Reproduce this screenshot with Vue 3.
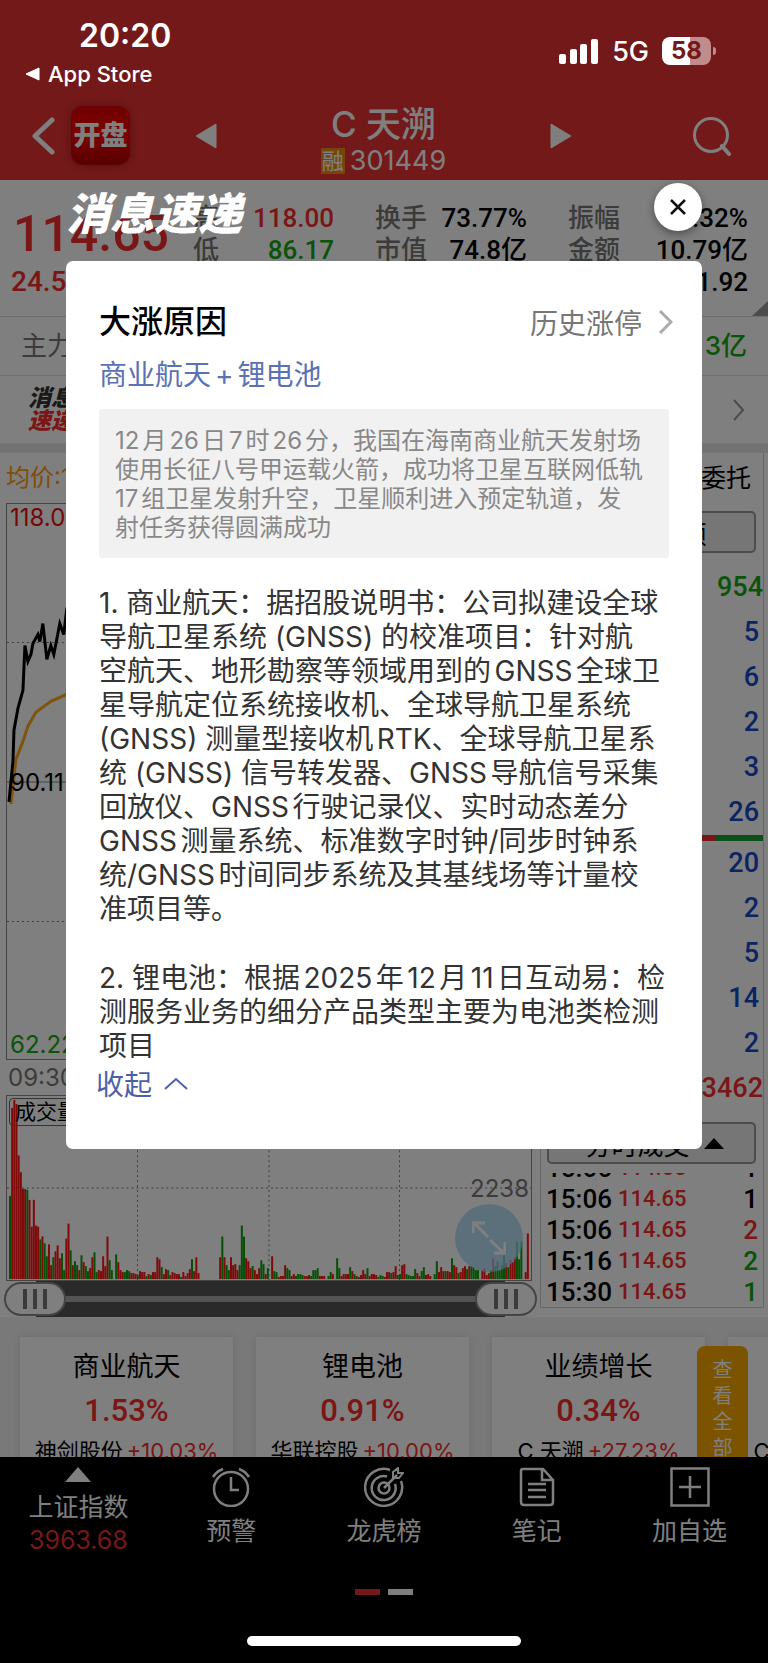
<template>
  <div class="app">
    <header class="top">
      <div class="status">
        <div class="status-left">
          <div class="time">20:20</div>
          <a class="back-app" href="#">
            <svg width="15" height="14" viewBox="0 0 15 14"><path d="M14 1v12L1 7z" fill="#fff" stroke="#fff" stroke-linejoin="round" /></svg>
            App Store
          </a>
        </div>
        <div class="status-right">
          <svg width="40" height="25" viewBox="0 0 40 25" fill="#fff">
            <rect x="0" y="15" width="7" height="10" rx="2" />
            <rect x="11" y="10" width="7" height="15" rx="2" />
            <rect x="21" y="5" width="7" height="20" rx="2" />
            <rect x="32" y="0" width="7" height="25" rx="2" />
          </svg>
          <span class="net">5G</span>
          <span class="battery">58</span>
        </div>
      </div>
      <nav class="nav">
        <button class="icon-btn" aria-label="返回">
          <svg width="24" height="38" viewBox="0 0 24 38"><path d="M21 3L4 19l17 16" fill="none" stroke="#fff" stroke-width="5" stroke-linecap="round" stroke-linejoin="round" /></svg>
        </button>
        <span class="logo">开盘</span>
        <button class="icon-btn prev" aria-label="上一只">
          <svg width="22" height="26" viewBox="0 0 22 26"><path d="M21 1v24L1 13z" fill="#fff" stroke="#fff" stroke-linejoin="round" /></svg>
        </button>
        <div class="stock">
          <h1>C 天溯</h1>
          <div class="code"><span class="rong">融</span>301449</div>
        </div>
        <button class="icon-btn next" aria-label="下一只">
          <svg width="22" height="26" viewBox="0 0 22 26"><path d="M1 1v24l20-12z" fill="#fff" stroke="#fff" stroke-linejoin="round" /></svg>
        </button>
        <button class="icon-btn" aria-label="搜索">
          <svg width="38" height="40" viewBox="0 0 38 40" fill="none" stroke="#fff" stroke-width="3"><circle cx="18" cy="19" r="16.5" /><path d="M29 30l7 8" stroke-width="4" stroke-linecap="round" /></svg>
        </button>
      </nav>
    </header>

    <main>
      <section class="quote">
        <div class="last">
          <div class="price">114.65</div>
          <div class="change">24.54</div>
        </div>
        <dl v-for="(col, i) in quoteCols" :key="i">
          <div v-for="item in col" :key="item.label">
            <dt>{{ item.label }}</dt>
            <dd :class="item.tone">{{ item.value }}</dd>
          </div>
        </dl>
      </section>
      <section class="main-force">
        <span>主力净额</span>
        <b>3亿</b>
      </section>
      <section class="news">
        <div class="news-logo">消息<br /><em>速递</em></div>
        <svg width="12" height="22" viewBox="0 0 12 22"><path d="M2 1l9 10-9 10" fill="none" stroke="#999" stroke-width="2" /></svg>
      </section>

      <section class="trade">
        <div class="charts">
          <div class="avg">均价:111.86</div>
          <div class="price-chart">
            <svg viewBox="0 0 526 557" preserveAspectRatio="none">
              <path d="M0 139H526M0 419H526" class="grid-line" />
              <path d="M0 279H526" class="mid-line" />
              <polyline class="avg-line" points="4,301 9,256 15,241 21,223 29,209 44,198 60,191 90,186 140,180" />
              <polyline class="price-line" points="2,299 6,258 7,227 11,205 16,187 18,142 21,158 24,151 26,140 31,131 33,138 36,120 40,156 44,142 47,151 53,120 57,131 60,105 70,98" />
            </svg>
            <span class="label high">118.00</span>
            <span class="label mid">90.11</span>
            <span class="label low">62.22</span>
          </div>
          <div class="start-time">09:30</div>
          <div class="volume">
            <span class="vol-name">成交量</span>
            <svg viewBox="0 0 526 186" preserveAspectRatio="none">
              <path d="M0 93H526M131 0V186M263 0V186M394 0V186" class="grid-line" />
              <rect
                v-for="bar in bars"
                :key="bar.x"
                :x="bar.x"
                :y="185 - bar.h"
                width="2"
                :height="bar.h"
                :fill="bar.color"
              />
            </svg>
            <span class="vol-half">2238</span>
            <button class="expand" aria-label="放大">
              <svg width="34" height="34" viewBox="0 0 34 34" fill="none" stroke="#fff" stroke-width="3"><path d="M16 16L2 2M1 12V2h12M18 19l14 13M22 32h11V21" /></svg>
            </button>
          </div>
          <div class="slider">
            <button class="handle" aria-label="起点"><i></i><i></i><i></i></button>
            <div class="track"></div>
            <button class="handle" aria-label="终点"><i></i><i></i><i></i></button>
          </div>
        </div>

        <aside class="orders">
          <div class="orders-tab">委托</div>
          <button class="box-btn">委托总额</button>
          <div class="total sell">954</div>
          <div v-for="(n, i) in sells" :key="'s' + i" class="order">{{ n }}</div>
          <div class="ratio"></div>
          <div v-for="(n, i) in buys" :key="'b' + i" class="order">{{ n }}</div>
          <div class="total buy">3462</div>
          <button class="box-btn deals-btn">
            分时成交
            <svg width="20" height="11" viewBox="0 0 20 11"><path d="M0 11L10 0l10 11z" /></svg>
          </button>
          <div class="deals">
            <div v-for="(d, i) in deals" :key="i" class="deal">
              <span class="deal-time">{{ d.time }}</span>
              <span class="deal-price">114.65</span>
              <span :class="d.tone">{{ d.qty }}</span>
            </div>
          </div>
        </aside>
      </section>

      <section class="themes">
        <article v-for="(t, i) in themes" :key="i" class="theme">
          <h3>{{ t.name }}</h3>
          <div class="theme-rate">{{ t.rate }}</div>
          <div class="theme-stock">{{ t.stock }}<span>{{ t.stockRate }}</span></div>
        </article>
        <button class="all-btn">查看全部</button>
      </section>
    </main>

    <footer class="bottom">
      <div class="tabs">
        <a class="index" href="#">
          <svg width="26" height="15" viewBox="0 0 26 15"><path d="M0 15L13 0l13 15z" fill="#fff" /></svg>
          <span>上证指数</span>
          <b>3963.68</b>
        </a>
        <a href="#">
          <svg width="40" height="40" viewBox="0 0 40 40" fill="none" stroke="#fff" stroke-width="2.5"><circle cx="20" cy="22" r="17" /><path d="M20 10v13h8M2 10a20 20 0 0 1 10-8M38 10a20 20 0 0 0-10-8" /></svg>
          <span>预警</span>
        </a>
        <a href="#">
          <svg width="40" height="40" viewBox="0 0 40 40" fill="none" stroke="#fff" stroke-width="2.5"><path d="M26 3A18.500 18.500 0 1 0 37 14" /><path d="M23 9.500A12 12 0 1 0 31 17" /><circle cx="20" cy="21" r="5.500" /><path d="M20 21L33 8" /><path d="M29 11V5l5-4v5h5l-4 5z" stroke-width="2" /></svg>
          <span>龙虎榜</span>
        </a>
        <a href="#">
          <svg width="36" height="40" viewBox="0 0 36 40" fill="none" stroke="#fff" stroke-width="2.5"><path d="M4 2h20l10 11v22q0 3-3 3H5q-3 0-3-3V4q0-2 2-2zM23 2v11h11M9 17h18M9 23h18M9 30h18" /></svg>
          <span>笔记</span>
        </a>
        <a href="#">
          <svg width="40" height="40" viewBox="0 0 40 40" fill="none" stroke="#fff" stroke-width="2.5"><path d="M1.500 1.500h37v37h-37zM20 9v22M9 20h22" /></svg>
          <span>加自选</span>
        </a>
      </div>
      <div class="pager"><i class="on"></i><i></i></div>
    </footer>

    <div v-if="show" class="mask">
      <div class="mask-head">
        <h2>消息速递</h2>
        <button class="close" aria-label="关闭" @click="show = false">
          <svg width="18" height="16" viewBox="0 0 18 16"><path d="M2 1l14 14M16 1L2 15" stroke="#111" stroke-width="2.5" /></svg>
        </button>
      </div>
      <div class="dialog">
        <div class="dialog-title">
          <h3>大涨原因</h3>
          <a href="#">
            历史涨停
            <svg width="14" height="24" viewBox="0 0 14 24"><path d="M1 1l11 11L1 23" fill="none" stroke="#aaa" stroke-width="3" /></svg>
          </a>
        </div>
        <div class="tags">商业航天<span>+</span>锂电池</div>
        <p class="summary">
          <span v-for="line in summary" :key="line">{{ line }}</span>
        </p>
        <p v-for="(part, i) in visibleReasons" :key="i" class="reason">
          <span v-for="line in part" :key="line">{{ line }}</span>
        </p>
        <button class="fold" @click="open = !open">
          {{ open ? '收起' : '展开' }}
          <svg :class="{ down: !open }" width="24" height="13" viewBox="0 0 24 13"><path d="M1 12L12 2l11 10" fill="none" stroke="#4c60a8" stroke-width="2" /></svg>
        </button>
      </div>
    </div>
    <div class="home-bar"></div>
  </div>
</template>

<script setup>
import { ref, computed } from 'vue';

const show = ref(true);
const open = ref(true);

const quoteCols = [
  [
    { label: '高', value: '118.00', tone: 'up' },
    { label: '低', value: '86.17', tone: 'down' },
  ],
  [
    { label: '换手', value: '73.77%' },
    { label: '市值', value: '74.8亿' },
  ],
  [
    { label: '振幅', value: '35.32%' },
    { label: '金额', value: '10.79亿' },
    { label: '市盈', value: '91.92' },
  ],
];

const sells = [5, 6, 2, 3, 26];
const buys = [20, 2, 5, 14, 2];

const deals = [
  { time: '15:06', qty: 1 },
  { time: '15:06', qty: 1 },
  { time: '15:06', qty: 2, tone: 'up' },
  { time: '15:16', qty: 2, tone: 'down' },
  { time: '15:30', qty: 1, tone: 'down' },
];

const themes = [
  { name: '商业航天', rate: '1.53%', stock: '神剑股份', stockRate: '+10.03%' },
  { name: '锂电池', rate: '0.91%', stock: '华联控股', stockRate: '+10.00%' },
  { name: '业绩增长', rate: '0.34%', stock: 'C 天溯', stockRate: '+27.23%' },
  { name: '', rate: '', stock: 'C 天溯', stockRate: '+27.23%' },
];

const summary = [
  '12月26日7时26分，我国在海南商业航天发射场',
  '使用长征八号甲运载火箭，成功将卫星互联网低轨',
  '17组卫星发射升空，卫星顺利进入预定轨道，发',
  '射任务获得圆满成功',
];

const reasons = [
  [
    '1. 商业航天：据招股说明书：公司拟建设全球',
    '导航卫星系统 (GNSS) 的校准项目：针对航',
    '空航天、地形勘察等领域用到的GNSS全球卫',
    '星导航定位系统接收机、全球导航卫星系统',
    '(GNSS) 测量型接收机RTK、全球导航卫星系',
    '统 (GNSS) 信号转发器、GNSS导航信号采集',
    '回放仪、GNSS行驶记录仪、实时动态差分',
    'GNSS测量系统、标准数字时钟/同步时钟系',
    '统/GNSS时间同步系统及其基线场等计量校',
    '准项目等。',
  ],
  [
    '2. 锂电池：根据2025年12月11日互动易：检',
    '测服务业务的细分产品类型主要为电池类检测',
    '项目',
  ],
];

const visibleReasons = computed(() => (open.value ? reasons : reasons.slice(0, 1)));

// one entry per minute, r = up, g = down, number = height
const volume =
  'g84 r173 r181 r177 r125 r108 r91 r91 g90 r80 r53 r80 r54 r53 g40 r43 g36 g23 r35 r14 ' +
  'g22 r28 r34 r21 g26 g9 r41 r56 g29 r14 g18 g14 r9 g24 r17 g13 g8 r11 r22 g27 ' +
  'g7 r9 r8 r23 r13 r43 g19 g9 r0 g25 r17 r9 r7 g7 g9 g8 r6 r6 r5 g4 ' +
  'r8 r7 r7 g3 r5 g4 r7 r7 r22 r20 g12 r5 r10 g9 r4 r7 r6 r5 r5 g2 ' +
  'r7 r3 r6 r10 g20 r8 r22 r6 r0 r0 r0 r0 r0 r0 r0 r0 r0 r22 g43 r22 ' +
  'g14 g9 r22 r14 r15 r9 g14 g54 g43 r21 r18 r11 g13 r9 r5 r11 g19 g15 r5 g11 ' +
  'r0 r23 g8 g7 r2 r3 r3 r14 g11 g9 r3 r5 g3 g5 g5 g4 r3 r3 r4 g3 ' +
  'g9 g9 g11 r3 r3 r3 r0 g3 g7 r5 r0 g21 g11 r3 r5 r5 r5 g12 r8 g5 ' +
  'r3 g2 r4 r9 r5 g11 r3 r5 r5 r4 g2 g4 g3 r2 r7 r7 g6 r7 r13 g4 ' +
  'g5 r14 r15 g5 g4 g3 g3 g10 r6 r3 g8 g12 r4 r5 r3 r0 g5 g18 r7 r12 ' +
  'r8 g8 r8 r7 g21 r14 r12 g6 r7 r11 r13 g10 r13 g13 g12 g9 g9 r0 r9 r11 ' +
  'r4 r6 g9 r21 g13 g18 g9 g14 g24 r16 g12 r19 r17 r22 g38 g20 g38 r0 r7 r46';

const bars = volume.split(' ').map((v, i) => ({
  x: 2 + (i * 522) / 240,
  h: Number(v.slice(1)),
  color: v[0] === 'r' ? '#ff1414' : '#0aa00a',
}));
</script>

<style>
body {
  margin: 0;
  background: #000;
}
</style>

<style scoped>
.app {
  position: relative;
  overflow: hidden;
  background: #fff;
  color: #000;
  font-family: Inter, "Noto Sans CJK SC", sans-serif;
}

h1, h2, h3, p, dl, dd {
  margin: 0;
  font-weight: 500;
}

button {
  padding: 0;
  border: 0;
  background: none;
  font-family: inherit;
  color: inherit;
}

a {
  color: inherit;
  text-decoration: none;
}

svg {
  display: block;
}

.up {
  color: #f42c2c;
}

.down {
  color: #12a810;
}

/* header */
.top {
  background: #e83232;
  color: #fff;
  padding-bottom: 2px;
}

.status {
  display: flex;
  justify-content: space-between;
  padding: 15px 57px 0 25px;
  height: 78px;
  position: relative;
  z-index: 3;
}

.time {
  padding-left: 54px;
  font-size: 32px;
  font-weight: 600;
  line-height: 42px;
}

.back-app {
  display: flex;
  align-items: center;
  gap: 8px;
  font-size: 22px;
  font-weight: 500;
  line-height: 34px;
}

.status-right {
  display: flex;
  align-items: center;
  gap: 13px;
  height: 72px;
}

.net {
  font-size: 27px;
  font-weight: 500;
}

.battery {
  position: relative;
  width: 49px;
  height: 28px;
  border-radius: 8px;
  background: linear-gradient(90deg, #fff 58%, #c08c8c 58%);
  color: #741919;
  font-size: 24px;
  font-weight: 700;
  line-height: 28px;
  text-align: center;
}

.battery::after {
  content: "";
  position: absolute;
  right: -5px;
  top: 10px;
  width: 3px;
  height: 8px;
  border-radius: 0 3px 3px 0;
  background: #c08c8c;
}

.nav {
  display: flex;
  align-items: center;
  padding: 0 37px 0 31px;
  height: 85px;
}

.logo {
  width: 59px;
  height: 59px;
  margin-left: 16px;
  border-radius: 12px;
  background: linear-gradient(#e00000, #f80000 50%, #b00000);
  box-shadow: 0 0 8px rgba(0, 0, 0, 0.3);
  font-size: 27px;
  font-weight: 900;
  line-height: 60px;
  text-align: center;
}

.prev {
  margin-left: 65px;
}

.next {
  margin-right: 121px;
}

.stock {
  flex: 1;
  padding-top: 8px;
  text-align: center;
}

.stock h1 {
  font-size: 35px;
  line-height: 42px;
}

.code {
  display: flex;
  justify-content: center;
  align-items: center;
  gap: 5px;
  font-size: 27px;
  line-height: 32px;
}

.rong {
  width: 24px;
  height: 26px;
  background: #f08a10;
  font-size: 22px;
  line-height: 26px;
}

/* quote */
.quote {
  position: relative;
  display: grid;
  grid-template-columns: 141px 141fr 152fr 180fr;
  gap: 41px;
  padding: 22px 20px 18px 11px;
  border-bottom: 1px solid #ddd;
  font-family: Roboto, "Noto Sans CJK SC", sans-serif;
}

.quote::after {
  content: "";
  position: absolute;
  right: 0;
  bottom: 0;
  border-left: 16px solid transparent;
  border-bottom: 15px solid #999;
}

.last {
  color: #f42c2c;
  font-weight: 500;
  white-space: nowrap;
}

.price {
  padding-left: 2px;
  font-size: 50px;
  line-height: 64px;
}

.change {
  font-size: 28px;
  line-height: 32px;
}

.quote dl > div {
  display: flex;
  justify-content: space-between;
  line-height: 32px;
  font-size: 26px;
}

dt {
  color: #777;
}

.main-force {
  display: flex;
  justify-content: space-between;
  padding: 0 21px;
  border-bottom: 1px solid #ddd;
  font-size: 26px;
  line-height: 58px;
  color: #777;
}

.main-force b {
  color: #12a810;
  font-weight: 500;
}

.news {
  display: flex;
  align-items: center;
  justify-content: space-between;
  height: 67px;
  padding: 0 24px 0 28px;
  border-bottom: 10px solid #e4e4e4;
}

.news-logo {
  font-size: 23px;
  font-weight: 900;
  font-style: italic;
  line-height: 23px;
  color: #333;
}

.news-logo em {
  color: #f42c2c;
}

/* charts */
.trade {
  display: grid;
  grid-template-columns: 1fr 224px;
  align-items: start;
  gap: 8px;
  padding: 0 4px 0 6px;
}

.avg {
  font-size: 24px;
  line-height: 50px;
  color: #ff9a10;
}

.price-chart,
.volume {
  position: relative;
  box-sizing: border-box;
  border: 1px solid #888;
}

.price-chart {
  height: 557px;
}

.price-chart svg,
.volume > svg {
  width: 100%;
  height: 100%;
}

.grid-line {
  fill: none;
  stroke: #777;
  stroke-width: 1;
  stroke-dasharray: 2 3;
}

.mid-line {
  stroke: #888;
}

.avg-line,
.price-line {
  fill: none;
  stroke: #ffa81a;
  stroke-width: 3;
}

.price-line {
  stroke: #000;
}

.label {
  position: absolute;
  left: 3px;
  font-size: 24px;
  line-height: 28px;
}

.high {
  top: 0;
  color: #e81010;
}

.mid {
  top: 265px;
}

.low {
  bottom: 0;
  color: #12a810;
}

.start-time {
  padding-left: 2px;
  font-size: 24px;
  line-height: 35px;
  color: #777;
}

.volume {
  height: 186px;
}

.vol-name {
  position: absolute;
  left: 2px;
  top: 2px;
  width: 80px;
  box-sizing: border-box;
  padding-left: 5px;
  border: 1px solid #666;
  border-radius: 4px;
  font-size: 21px;
  line-height: 26px;
}

.vol-half {
  position: absolute;
  right: 2px;
  top: 78px;
  font-size: 24px;
  line-height: 30px;
  color: #777;
}

.expand {
  position: absolute;
  right: 8px;
  bottom: 8px;
  display: grid;
  place-items: center;
  width: 68px;
  height: 68px;
  border-radius: 50%;
  background: rgba(160, 215, 245, 0.75);
}

.slider {
  display: flex;
  align-items: center;
  height: 36px;
  margin: 0 -5px 0 -2px;
}

.handle {
  position: relative;
  z-index: 1;
  display: flex;
  align-items: center;
  justify-content: center;
  gap: 6px;
  box-sizing: border-box;
  width: 62px;
  height: 34px;
  border: 2px solid #888;
  border-radius: 17px;
  background: #fff;
}

.handle i {
  width: 4px;
  height: 20px;
  background: #777;
}

.track {
  flex: 1;
  height: 36px;
  margin: 0 -30px;
  background: linear-gradient(#555 15px, #a8a8a8 15px, #a8a8a8 21px, #555 21px);
}

/* order panel */
.orders {
  box-sizing: border-box;
  border: 1px solid #ccc;
  border-top: 0;
  font-family: Roboto, "Noto Sans CJK SC", sans-serif;
  text-align: right;
}

.orders-tab {
  height: 58px;
  padding-right: 12px;
  font-size: 25px;
  line-height: 52px;
}

.box-btn {
  display: flex;
  align-items: center;
  justify-content: center;
  gap: 14px;
  box-sizing: border-box;
  width: calc(100% - 13px);
  height: 42px;
  margin: 0 7px 12px 6px;
  padding-left: 6px;
  border: 2px solid #999;
  border-radius: 5px;
  background: #ececec;
  font-size: 26px;
}

.total,
.order {
  font-size: 27px;
  font-weight: 500;
  line-height: 45px;
}

.order {
  padding-right: 4px;
  color: #1448c8;
}

.sell {
  color: #12a810;
}

.buy {
  color: #f42c2c;
}

.ratio {
  height: 6px;
  background: linear-gradient(90deg, #f42c2c 79%, #18a030 79%);
}

.deals-btn {
  margin: 11px 7px 9px 6px;
}

.deals {
  display: flex;
  flex-direction: column;
  justify-content: flex-end;
  height: 134px;
  overflow: hidden;
}

.deal {
  display: flex;
  flex: none;
  align-items: center;
  gap: 6px;
  height: 31px;
  padding: 0 5px;
  font-size: 26px;
  font-weight: 500;
}

.deal-price {
  flex: 1;
  font-size: 22px;
  color: #f42c2c;
  text-align: left;
}

/* themes */
.themes {
  position: relative;
  display: grid;
  grid-auto-flow: column;
  grid-auto-columns: 213px;
  gap: 23px;
  box-sizing: border-box;
  height: 140px;
  padding: 20px 0 0 20px;
  overflow: hidden;
  background: #f2f2f2;
}

.theme {
  height: 150px;
  padding-top: 12px;
  box-sizing: border-box;
  background: #fff;
  box-shadow: 0 0 8px rgba(0, 0, 0, 0.1);
  text-align: center;
  white-space: nowrap;
}

.theme h3,
.theme-rate {
  height: 36px;
  margin-bottom: 8px;
  font-size: 27px;
  font-weight: 400;
  line-height: 36px;
}

.theme-rate {
  font-family: Roboto, sans-serif;
  font-size: 31px;
  font-weight: 500;
  color: #f42c2c;
}

.theme-stock {
  font-size: 22px;
  line-height: 28px;
}

.theme-stock span {
  margin-left: 4px;
  color: #f42c2c;
}

.all-btn {
  position: absolute;
  right: 20px;
  top: 29px;
  width: 51px;
  height: 126px;
  padding: 0 15px;
  border-radius: 8px;
  background: #f8a800;
  color: #fff;
  font-size: 20px;
  line-height: 26px;
}

/* bottom bar */
.bottom {
  height: 206px;
  background: #000;
  color: #fff;
}

.tabs {
  display: grid;
  grid-template-columns: repeat(5, 1fr);
  padding: 10px 2px 0;
  height: 122px;
  box-sizing: border-box;
}

.tabs a {
  display: flex;
  flex-direction: column;
  align-items: center;
  gap: 7px;
  font-size: 25px;
  line-height: 34px;
}

.tabs .index {
  gap: 8px;
}

.index b {
  color: #e83232;
  font-size: 25px;
  font-weight: 400;
  line-height: 32px;
  margin-top: -8px;
}

.pager {
  display: flex;
  justify-content: center;
  gap: 8px;
  padding-top: 10px;
}

.pager i {
  width: 25px;
  height: 6px;
  background: #fff;
}

.pager .on {
  background: #e83232;
}

.home-bar {
  position: absolute;
  z-index: 3;
  left: 50%;
  bottom: 17px;
  width: 274px;
  height: 10px;
  margin-left: -137px;
  border-radius: 5px;
  background: #fff;
}

/* dialog */
.mask {
  position: absolute;
  inset: 0;
  z-index: 2;
  padding: 183px 66px 0;
  background: rgba(0, 0, 0, 0.5);
}

.mask-head {
  display: flex;
  justify-content: space-between;
  align-items: flex-start;
  height: 78px;
}

.mask-head h2 {
  color: #fff;
  font-size: 44px;
  font-weight: 900;
  font-style: italic;
  line-height: 62px;
}

.close {
  display: grid;
  place-items: center;
  width: 48px;
  height: 48px;
  border-radius: 50%;
  background: #fff;
  box-shadow: 0 3px 8px rgba(0, 0, 0, 0.4);
}

.dialog {
  padding: 40px 33px 46px;
  border-radius: 7px;
  background: #fff;
  text-autospace: normal;
}

.dialog-title {
  display: flex;
  align-items: center;
  justify-content: space-between;
  margin-right: -4px;
}

.dialog-title h3 {
  font-size: 32px;
  line-height: 42px;
}

.dialog-title a {
  display: flex;
  align-items: center;
  gap: 17px;
  color: #777;
  font-size: 28px;
}

.tags {
  margin-top: 14px;
  color: #5a72b4;
  font-size: 28px;
  line-height: 36px;
}

.tags span {
  margin: 0 4px;
}

.summary {
  margin-top: 16px;
  padding: 17px 16px 16px;
  border-radius: 3px;
  background: #f1f1f1;
  color: #888;
  font-size: 24px;
  font-weight: 400;
  line-height: 29px;
}

.summary span,
.reason span {
  display: block;
  white-space: nowrap;
}

.reason {
  margin-top: 35px;
  color: #333;
  font-size: 28px;
  font-weight: 400;
  line-height: 34px;
}

.summary + .reason {
  margin-top: 28px;
}

.fold {
  display: flex;
  align-items: center;
  gap: 12px;
  height: 40px;
  margin-left: -3px;
  color: #4c60a8;
  font-size: 28px;
}

.fold .down {
  transform: rotate(180deg);
}
</style>
